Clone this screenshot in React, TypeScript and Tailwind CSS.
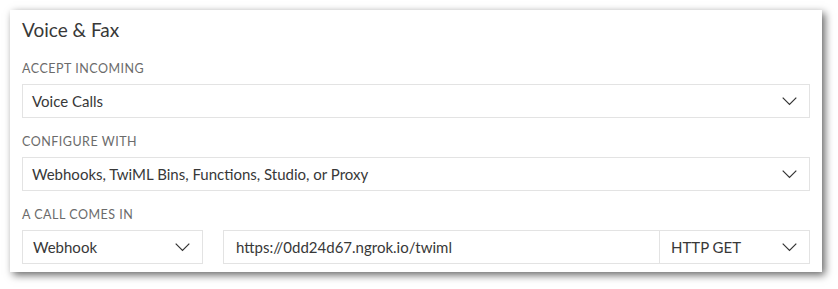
const Chevron = () => (
    <svg width="15" height="9" viewBox="0 0 15 9" fill="none" className="shrink-0">
        <path d="M0.7 0.7L7.5 7.5L14.3 0.7" stroke="#333" strokeWidth="1.2" />
    </svg>
);

const Label = ({ children }: { children: React.ReactNode }) => (
    <div className="h-4 text-[12.5px] leading-4 tracking-[0.5px] text-[#6b6b6b] uppercase">{children}</div>
);

export default function App() {
    return (
        <div className="bg-white w-[838px] h-[289px] pt-[10px] pl-[10px]" style={{ fontFamily: 'Lato, "Open Sans", sans-serif' }}>
            <div className="w-[812px] h-[262px] bg-white shadow-[3px_3px_8px_rgba(0,0,0,0.6)] px-3 pt-[8px] flex flex-col text-[#383838]">
                <h2 className="text-[19px] leading-6">Voice &amp; Fax</h2>

                <div className="mt-[19px]">
                    <Label>Accept Incoming</Label>
                    <div className="mt-[7px] h-[34px] border border-[#e3e3e3] flex items-center justify-between pl-[9px] pr-[12px] text-[15px]">
                        <span>Voice Calls</span>
                        <Chevron />
                    </div>
                </div>

                <div className="mt-4">
                    <Label>Configure With</Label>
                    <div className="mt-[7px] h-[34px] border border-[#e3e3e3] flex items-center justify-between pl-[9px] pr-[12px] text-[15px]">
                        <span>Webhooks, TwiML Bins, Functions, Studio, or Proxy</span>
                        <Chevron />
                    </div>
                </div>

                <div className="mt-4">
                    <Label>A Call Comes In</Label>
                    <div className="mt-[7px] flex h-[34px] text-[15px]">
                        <div className="w-[181px] border border-[#e3e3e3] flex items-center justify-between pl-[10px] pr-[12px]">
                            <span>Webhook</span>
                            <Chevron />
                        </div>
                        <div className="ml-5 w-[437px] border border-[#e3e3e3] flex items-center pl-3">
                            <span>https://0dd24d67.ngrok.io/twiml</span>
                        </div>
                        <div className="w-[150px] border border-l-0 border-[#e3e3e3] flex items-center justify-between pl-[11px] pr-[12px]">
                            <span>HTTP GET</span>
                            <Chevron />
                        </div>
                    </div>
                </div>
            </div>
        </div>
    );
}
